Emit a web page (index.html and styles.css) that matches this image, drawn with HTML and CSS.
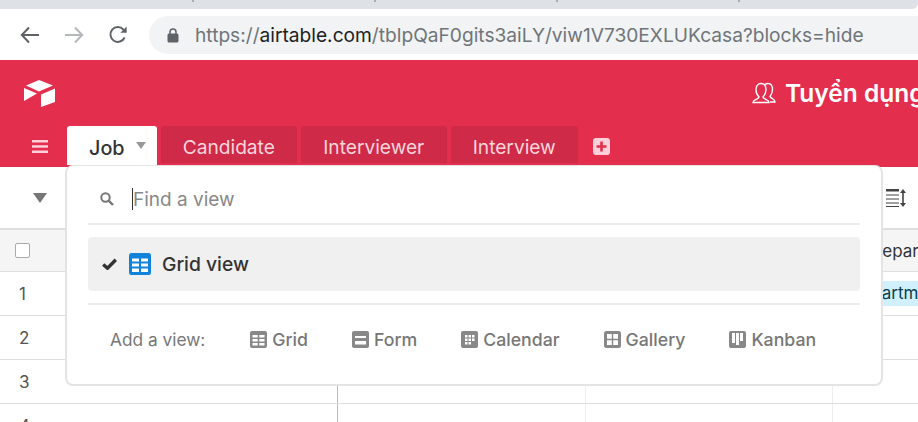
FILE: index.html
```html
<!DOCTYPE html>
<html>
<head>
  <meta charset="UTF-8">
  <meta name="viewport" content="width=device-width, initial-scale=1.0">
  <title>Airtable - Job</title>
  <link rel="stylesheet" href="styles.css">
</head>
<body>
  <div class="tab-strip">
    <span class="tab-tick"></span>
    <span class="tab-tick"></span>
    <span class="tab-tick"></span>
    <span class="tab-tick"></span>
  </div>

  <div class="browser-bar">
    <div class="nav-buttons">
      <svg class="nav-icon" viewBox="0 0 20 18" width="20" height="18" fill="none" stroke="#5f6368" stroke-width="2">
        <path d="M19 9H2M9 1.5L1.8 9L9 16.5"/>
      </svg>
      <svg class="nav-icon" viewBox="0 0 20 18" width="20" height="18" fill="none" stroke="#b4b7bb" stroke-width="2">
        <path d="M1 9H18M11 1.5L18.2 9L11 16.5"/>
      </svg>
      <svg class="nav-icon" viewBox="0 0 20 20" width="20" height="20" fill="none" stroke="#5f6368" stroke-width="2">
        <path d="M16.6 12.5A7.4 7.4 0 1 1 15.4 4.6L18 7"/>
        <path d="M18.6 1.6V7.8H12.4" fill="#5f6368" stroke="none"/>
      </svg>
    </div>
    <div class="url-pill">
      <svg class="lock-icon" viewBox="0 0 12 15" width="12" height="15">
        <path d="M3 6V4a3 3 0 0 1 6 0v2" fill="none" stroke="#5f6368" stroke-width="1.5"/>
        <rect x="0.5" y="5.5" width="11" height="9" rx="1.5" fill="#5f6368"/>
      </svg>
      <span class="url-text">https://<b>airtable.com</b>/tblpQaF0gits3aiLY/viw1V730EXLUKcasa?blocks=hide</span>
    </div>
  </div>

  <div class="app-header">
    <div class="header-top">
      <svg class="logo" viewBox="0 0 31 27" width="31" height="27" fill="#fff">
        <polygon points="15,0 29,5.5 15,11.5 2,5.5"/>
        <polygon points="0,8 13,13.5 0,21"/>
        <polygon points="17,14.5 31,8.5 31,22 17,27"/>
      </svg>
      <div class="base-title">
        <svg viewBox="0 0 24 22" width="24" height="22" fill="none" stroke="#fff" stroke-width="1.4">
          <path d="M1 20.500c0-3 5.500-3 6-5.500c-2-2-3-4-3-7c0-4 2-6.500 5-6.500s5 2.500 5 6.500c0 3-1 5-3 7c.5 2.500 6 2.500 6 5.500z"/>
          <path d="M13 2.500c.8-.6 1.800-1 3-1c3 0 4.500 2.500 4.500 6c0 3-1 5-2.500 7c.5 2 5 2 5 5.500h-5"/>
        </svg>
        <span>Tuyển dụng</span>
      </div>
    </div>
    <div class="table-tabs">
      <svg class="menu-icon" viewBox="0 0 16 13" width="16" height="13" fill="#fbd0d8">
        <rect width="16" height="2.500"/>
        <rect y="5.200" width="16" height="2.500"/>
        <rect y="10.500" width="16" height="2.500"/>
      </svg>
      <div class="table-tab active">Job<span class="tab-caret"></span></div>
      <div class="table-tab">Candidate</div>
      <div class="table-tab">Interviewer</div>
      <div class="table-tab">Interview</div>
      <svg class="add-table" viewBox="0 0 17 17" width="17" height="17">
        <rect width="17" height="17" rx="3" fill="#fbd0d8"/>
        <path d="M8.500 3.500v10M3.500 8.500h10" stroke="#e42e4e" stroke-width="2.600"/>
      </svg>
    </div>
  </div>

  <div class="view-bar">
    <span class="view-caret"></span>
    <svg class="row-height" viewBox="0 0 20 20" width="20" height="20" fill="#444">
      <rect x="0" y="1" width="13" height="2.500"/>
      <rect x="0" y="6.500" width="13" height="1"/>
      <rect x="0" y="10.500" width="13" height="1"/>
      <rect x="0" y="14.500" width="13" height="1"/>
      <rect x="0" y="18" width="13" height="1"/>
      <path d="M17 1l3 4h-2.200v10H20l-3 4l-3-4h2.200V5H14z"/>
    </svg>
  </div>

  <div class="grid">
    <div class="grid-row grid-head">
      <div class="cell first"><span class="checkbox"></span></div>
      <div class="cell"></div>
      <div class="cell"></div>
      <div class="cell head-label">Department</div>
    </div>
    <div class="grid-row">
      <div class="cell first">1</div>
      <div class="cell main"></div>
      <div class="cell"></div>
      <div class="cell"><span class="chip">Department</span></div>
    </div>
    <div class="grid-row">
      <div class="cell first">2</div>
      <div class="cell main"></div>
      <div class="cell"></div>
      <div class="cell"></div>
    </div>
    <div class="grid-row">
      <div class="cell first">3</div>
      <div class="cell main"></div>
      <div class="cell"></div>
      <div class="cell"></div>
    </div>
    <div class="grid-row">
      <div class="cell first">4</div>
      <div class="cell main"></div>
      <div class="cell"></div>
      <div class="cell"></div>
    </div>
  </div>

  <div class="view-menu">
    <div class="view-search">
      <svg viewBox="0 0 14 14" width="14" height="14" fill="none" stroke="#777" stroke-width="2">
        <circle cx="5.500" cy="5.500" r="4.200"/>
        <path d="M8.600 8.600L13 13" stroke-width="2.400"/>
      </svg>
      <span class="text-cursor"></span>
      <span class="search-text">Find a view</span>
    </div>
    <div class="view-item">
      <svg class="check" viewBox="0 0 15 12" width="15" height="12" fill="none" stroke="#333" stroke-width="3.400">
        <path d="M1.200 6.500L5.500 10.200L13.800 1.800"/>
      </svg>
      <svg viewBox="0 0 22 22" width="22" height="22">
        <rect width="22" height="22" rx="2.500" fill="#1283da"/>
        <path d="M3 5.500h7v3H3zM12 5.500h7v3h-7zM3 10.500h7v3H3zM12 10.500h7v3h-7zM3 15.500h7v3.500H3zM12 15.500h7v3.500h-7z" fill="#fff"/>
      </svg>
      <span class="view-name">Grid view</span>
    </div>
    <div class="add-view">
      <span class="add-label">Add a view:</span>
      <div class="add-option">
        <svg viewBox="0 0 17 17" width="17" height="17">
          <rect width="17" height="17" rx="2" fill="#888"/>
          <path d="M2.500 4h5.200v2.500H2.500zM9.300 4h5.200v2.500H9.300zM2.500 8h5.200v2.500H2.500zM9.300 8h5.200v2.500H9.300zM2.500 12h5.200v2.500H2.500zM9.300 12h5.200v2.500H9.300z" fill="#fff"/>
        </svg>
        Grid
      </div>
      <div class="add-option">
        <svg viewBox="0 0 17 17" width="17" height="17">
          <rect width="17" height="17" rx="2" fill="#888"/>
          <path d="M3 5h11v2H3zM3 10h11v3.500H3z" fill="#fff"/>
        </svg>
        Form
      </div>
      <div class="add-option">
        <svg viewBox="0 0 17 17" width="17" height="17">
          <rect width="17" height="17" rx="2" fill="#888"/>
          <path d="M4 4h2.500v2.500H4zM7.500 4H10v2.500H7.500zM11 4h2.500v2.500H11zM4 7.500h2.500V10H4zM7.500 7.500H10V10H7.500zM11 7.500h2.500V10H11zM4 11h2.500v2.500H4zM7.500 11H10v2.500H7.500z" fill="#fff"/>
        </svg>
        Calendar
      </div>
      <div class="add-option">
        <svg viewBox="0 0 17 17" width="17" height="17">
          <rect width="17" height="17" rx="2.500" fill="#888"/>
          <path d="M3 3h4.800v4.800H3zM9.200 3H14v4.800H9.200zM3 9.200h4.800V14H3zM9.200 9.200H14V14H9.200z" fill="#fff"/>
        </svg>
        Gallery
      </div>
      <div class="add-option">
        <svg viewBox="0 0 17 17" width="17" height="17">
          <rect width="17" height="17" rx="2" fill="#888"/>
          <path d="M3 2h3v10H3zM7 2h3v12H7zM11 2h3v8h-3z" fill="#fff"/>
        </svg>
        Kanban
      </div>
    </div>
  </div>
</body>
</html>
```

FILE: styles.css
```css
:root {
  --red: #e42e4e;
  --red-dark: #cf2a48;
  --pink: #fbd0d8;
  --line: #dedede;
  --menu-line: #ececec;
  --text: #333333;
  --muted: #777777;
}

body {
  font-family: Inter, "Liberation Sans", sans-serif;
  margin: 0;
  padding: 0;
  height: 100vh;
  background-color: #ffffff;
  color: var(--text);
  overflow: hidden;
}

.tab-strip {
  height: 9px;
  display: flex;
  padding-left: 192px;
  gap: 180px;
  background-color: #dee1e6;
  border-bottom-right-radius: 6px;
}

.tab-tick {
  width: 2px;
  height: 2px;
  background-color: #a9acb1;
}

.browser-bar {
  height: 51px;
  display: flex;
  align-items: center;
  padding-left: 20px;
  box-sizing: border-box;
  padding-top: 1px;
}

.nav-buttons {
  display: flex;
  align-items: center;
  gap: 24px;
  width: 129px;
}

.url-pill {
  flex: 1;
  height: 38px;
  display: flex;
  align-items: center;
  padding-left: 18px;
  background-color: #f1f3f4;
  border-radius: 19px 0 0 19px;
  min-width: 0;
}

.lock-icon {
  margin-right: 16px;
}

.url-text {
  font-size: 19.160px;
  color: #70757a;
  white-space: nowrap;
}

.url-text b {
  font-weight: 400;
  color: #202124;
}

.app-header {
  height: 107px;
  background-color: var(--red);
  box-sizing: border-box;
}

.header-top {
  height: 66px;
  display: flex;
  align-items: center;
  padding-left: 24px;
  white-space: nowrap;
}

.logo {
  flex-shrink: 0;
}

.base-title {
  display: flex;
  align-items: center;
  gap: 9px;
  margin-left: 697px;
  font-size: 24.500px;
  font-weight: 600;
  color: #ffffff;
}

.table-tabs {
  display: flex;
  align-items: flex-start;
  gap: 4px;
  padding-left: 32px;
}

.menu-icon {
  margin: 14px 15px 0 0;
}

.table-tab {
  height: 37px;
  display: flex;
  align-items: center;
  padding: 4px 22.200px 0;
  box-sizing: border-box;
  font-size: 19.150px;
  color: #fbd5dc;
  background-color: var(--red-dark);
  border-radius: 3px 3px 0 0;
}

.table-tab.active {
  height: 39px;
  padding: 4px 11px 0 22px;
  font-size: 19.800px;
  font-weight: 500;
  color: var(--text);
  background-color: #ffffff;
}

.tab-caret {
  width: 0;
  height: 0;
  margin: 0 0 4px 11px;
  border-left: 5.500px solid transparent;
  border-right: 5.500px solid transparent;
  border-top: 7px solid #999999;
}

.add-table {
  margin: 12px 0 0 11px;
}

.view-bar {
  height: 61px;
  display: flex;
  align-items: center;
  justify-content: space-between;
  padding: 0 12px 0 33px;
}

.view-caret {
  width: 0;
  height: 0;
  border-left: 7px solid transparent;
  border-right: 7px solid transparent;
  border-top: 10px solid #777777;
}

.grid {
  border-top: 2px solid var(--line);
}

.grid-row {
  height: 44px;
  display: grid;
  grid-template-columns: 337px 248px 247px 1fr;
  box-sizing: border-box;
  border-bottom: 1px solid var(--line);
}

.grid-head {
  height: 42px;
  background-color: #f5f5f5;
}

.cell {
  display: flex;
  align-items: center;
  font-size: 17px;
  white-space: nowrap;
  border-left: 1px solid #eeeeee;
  overflow: hidden;
}

.cell.main {
  border-left-color: #bbbbbb;
}

.cell.first {
  border-left: none;
  padding-left: 19px;
  color: #555555;
}

.checkbox {
  width: 13px;
  height: 13px;
  margin-left: -4px;
  background-color: #ffffff;
  border: 1px solid #aaaaaa;
  border-radius: 2px;
}

.head-label {
  padding-left: 37px;
}

.chip {
  margin-left: 8px;
  padding: 2px 8px;
  height: 25px;
  box-sizing: border-box;
  line-height: 21px;
  color: #0b3d4f;
  background-color: #d0f0fd;
  border-radius: 3px;
}

.view-menu {
  position: absolute;
  left: 65px;
  top: 165px;
  width: 818px;
  height: 221px;
  box-sizing: border-box;
  padding: 0 21px;
  background-color: #ffffff;
  border: 2px solid #e4e4e4;
  border-top-width: 1px;
  border-radius: 8px;
}

.view-search {
  height: 59px;
  box-sizing: border-box;
  display: flex;
  align-items: center;
  padding: 9px 0 0 12px;
  border-bottom: 2px solid var(--menu-line);
}

.text-cursor {
  width: 1px;
  height: 22px;
  margin-left: 18px;
  background-color: #333333;
}

.search-text {
  font-size: 19px;
  color: #888888;
}

.view-item {
  height: 54px;
  margin-top: 12px;
  display: flex;
  align-items: center;
  padding-left: 14px;
  background-color: #f0f0f0;
  border-radius: 4px;
}

.check {
  margin-right: 12px;
}

.view-name {
  margin-left: 11px;
  font-size: 19.300px;
  font-weight: 500;
}

.add-view {
  height: 72px;
  margin-top: 12px;
  padding: 0 0 2px 22px;
  box-sizing: border-box;
  display: flex;
  align-items: center;
  gap: 44px;
  border-top: 2px solid var(--menu-line);
  font-size: 17.700px;
  color: var(--muted);
}

.add-label {
  font-size: 17.300px;
  margin-right: 1px;
}

.add-option {
  display: flex;
  align-items: center;
  gap: 5px;
  font-weight: 500;
}
```
